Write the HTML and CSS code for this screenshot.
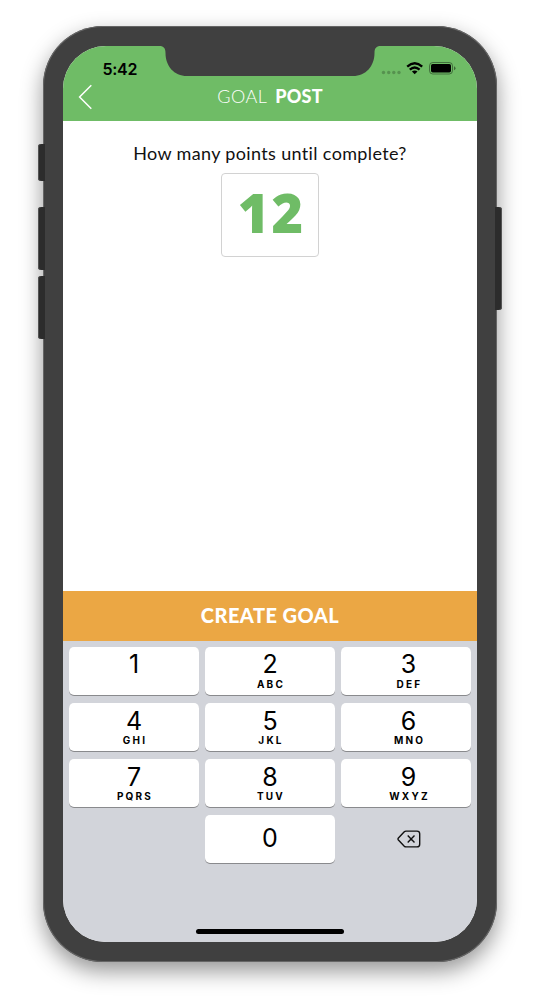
FILE: index.html
```html
<!DOCTYPE html>
<html lang="en">
<head>
<meta charset="utf-8">
<title>Goal Post</title>
<link rel="stylesheet" href="styles.css">
</head>
<body>
<div class="phone">
  <i class="side-button mute"></i>
  <i class="side-button volume-up"></i>
  <i class="side-button volume-down"></i>
  <i class="side-button power"></i>
  <main class="screen">
    <svg class="notch" width="222" height="31" viewBox="0 0 222 31"><path d="M0 0H222C218 0 215.500 1.500 215.500 7C215.500 20 207 30 194 30H28C15 30 6.500 20 6.500 7C6.500 1.500 4 0 0 0Z"/></svg>
    <header class="header">
      <div class="status">
        <span class="time">5:42</span>
        <svg class="indicators" width="76" height="16" viewBox="0 0 76 16">
          <g opacity=".22"><circle cx="3.500" cy="11.500" r="1.700"/><circle cx="8.700" cy="11.500" r="1.700"/><circle cx="13.800" cy="11.500" r="1.700"/><circle cx="19" cy="11.500" r="1.700"/></g>
          <g fill="none" stroke="#000" stroke-width="2.300"><path d="M27.200 5.600Q34.700 -1.100 42.200 5.600"/><path d="M29.800 8.700Q34.700 4.200 39.600 8.700"/></g>
          <path d="M31.900 10.500Q34.700 8.500 37.500 10.500L34.700 13.300Z"/>
          <rect x="49.500" y="1.500" width="23" height="11.500" rx="3.300" fill="none" stroke="#000" stroke-opacity=".4"/>
          <rect x="51" y="3" width="20" height="8.500" rx="1.700"/>
          <path d="M74 5.300q1.500.6 1.500 2t-1.500 2z" opacity=".45"/>
        </svg>
      </div>
      <div class="titlebar">
        <svg class="back" width="15" height="26" viewBox="0 0 15 26"><path d="M13.300 1.200L1.600 13L13.300 24.800"/></svg>
        <h1 class="title"><span class="light">GOAL</span><span class="bold">POST</span></h1>
      </div>
    </header>
    <section class="content">
      <label class="question" for="points">How many points until complete?</label>
      <output class="points" id="points">12</output>
    </section>
    <button class="create">CREATE GOAL</button>
    <section class="keypad">
      <div class="keys">
        <div class="key"><b>1</b></div>
        <div class="key"><b>2</b><small>ABC</small></div>
        <div class="key right"><b>3</b><small>DEF</small></div>
        <div class="key lower"><b>4</b><small>GHI</small></div>
        <div class="key lower"><b>5</b><small>JKL</small></div>
        <div class="key lower right"><b>6</b><small>MNO</small></div>
        <div class="key lower"><b>7</b><small>PQRS</small></div>
        <div class="key lower"><b>8</b><small>TUV</small></div>
        <div class="key lower right"><b>9</b><small>WXYZ</small></div>
        <div></div>
        <div class="key zero"><b>0</b></div>
        <div class="delete"><svg width="24" height="18" viewBox="0 0 24 18"><path d="M9 1.100H20Q22.700 1.100 22.700 3.800V14.200Q22.700 16.900 20 16.900H9Q8 16.900 7.300 16.200L1.400 10Q.6 9 1.400 8L7.300 1.800Q8 1.100 9 1.100ZM10.700 5.600L17.500 12.400M17.500 5.600L10.700 12.400"/></svg></div>
      </div>
      <div class="home"></div>
    </section>
  </main>
</div>
</body>
</html>
```
FILE: styles.css
```css
* { box-sizing: border-box; }
body { margin: 0; height: 1004px; background: #fff; overflow: hidden; }
.phone {
  position: relative;
  width: 454px;
  height: 936px;
  margin: 26px 0 0 43px;
  padding: 20px;
  border-radius: 60px;
  background: #404040;
  box-shadow: inset 0 0 0 1px #666, 0 9px 22px rgba(0,0,0,.42);
}
.screen {
  position: relative;
  display: flex;
  flex-direction: column;
  height: 896px;
  border-radius: 43px;
  overflow: hidden;
  background: #fff;
}
.side-button {
  position: absolute;
  left: -5px;
  width: 7px;
  border-radius: 3px 0 0 3px;
  background: #2c2c2c;
  box-shadow: inset 1px 0 #555;
}
.mute { top: 118px; height: 37px; }
.volume-up { top: 181px; height: 63px; }
.volume-down { top: 250px; height: 63px; }
.power {
  top: 181px;
  left: auto;
  right: -5px;
  height: 103px;
  border-radius: 0 3px 3px 0;
  box-shadow: inset -1px 0 #555;
}
.notch { position: absolute; top: 0; left: 96px; fill: #404040; }
.header { height: 75px; background: #6fbc66; }
.status {
  display: flex;
  justify-content: space-between;
  height: 36px;
  padding: 15px 21px 0 39.500px;
}
.time { font: 600 16px/16px Inter, sans-serif; letter-spacing: -.3px; }
.titlebar {
  display: grid;
  grid-template-columns: 1fr auto 1fr;
  align-items: center;
  height: 30px;
  padding: 0 15px;
}
.back { fill: none; stroke: #fff; stroke-width: 1.500; }
.title {
  display: flex;
  gap: 8px;
  margin: 0;
  color: #fff;
  font: 300 18px/28px Lato, sans-serif;
  padding-bottom: 2px;
}
.light { letter-spacing: .5px; }
.bold { font-weight: 900; letter-spacing: .2px; }
.content {
  display: flex;
  flex-direction: column;
  align-items: center;
  flex: 1;
  padding-top: 20px;
}
.question { color: #111; font: 400 18px/24px Lato, sans-serif; letter-spacing: .35px; }
.points {
  width: 98px;
  height: 84px;
  margin-top: 8px;
  padding-left: 3px;
  border: 1px solid #d2d2d2;
  border-radius: 4px;
  color: #6fbc66;
  text-align: center;
  font: 800 54px/76px "Open Sans", sans-serif;
  letter-spacing: 2px;
}
.create {
  height: 50px;
  padding: 0;
  border: 0;
  background: #eba744;
  color: #fff;
  font: 900 20px/48px Lato, sans-serif;
  letter-spacing: .45px;
  padding-bottom: 2px;
}
.keypad {
  display: flex;
  flex-direction: column;
  justify-content: space-between;
  align-items: center;
  height: 301px;
  padding: 6px 6px 8px;
  background: #d2d4da;
}
.keys {
  display: grid;
  grid-template-columns: repeat(3, 130px);
  grid-auto-rows: 49px;
  gap: 7px 6px;
}
.key {
  display: flex;
  flex-direction: column;
  align-items: center;
  height: 48px;
  padding-top: 4px;
  border-radius: 5px;
  background: #fff;
  box-shadow: 0 1px #898a8d;
}
.lower { padding-top: 5px; }
.lower small { margin-top: 0; }
.right { padding-left: 5px; }
.key b { font: 400 25px/26px Inter, sans-serif; }
.key small {
  margin: 1px -2px 0 0;
  font: 700 10px/13px Inter, sans-serif;
  letter-spacing: 2.200px;
}
.key.lower small { margin-top: 0; }
.key.zero { padding-top: 10px; }
.delete { display: flex; align-items: center; justify-content: center; padding: 0 0 2px 6px; }
.delete svg { fill: none; stroke: #111; stroke-width: 1.400; stroke-linejoin: round; }
.home { width: 148px; height: 5px; border-radius: 3px; background: #000; }
```
